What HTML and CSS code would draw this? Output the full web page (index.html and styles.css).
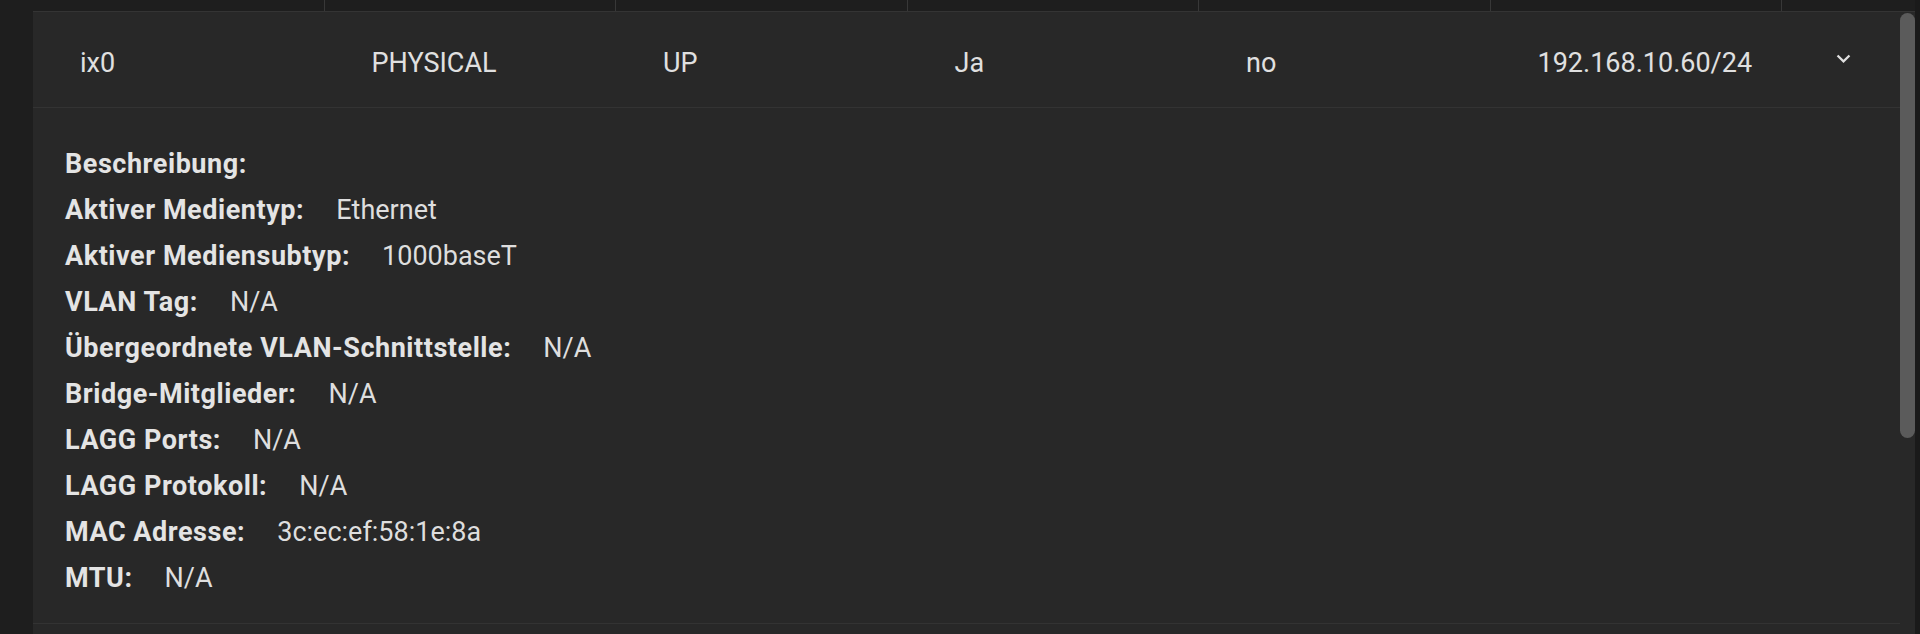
FILE: index.html
```html
<!DOCTYPE html>
<html>
<head>
  <title>Netzwerkschnittstellen</title>
  <link rel="stylesheet" href="styles.css">
</head>
<body>
  <div class="layout">
    <div class="main">
      <div class="thead">
        <div class="th"></div>
        <div class="th"></div>
        <div class="th"></div>
        <div class="th"></div>
        <div class="th"></div>
        <div class="th"></div>
        <div class="th th-last"></div>
      </div>

      <div class="panel">
        <div class="panel-content">
          <div class="row">
            <div class="cell">ix0</div>
            <div class="cell">PHYSICAL</div>
            <div class="cell">UP</div>
            <div class="cell">Ja</div>
            <div class="cell">no</div>
            <div class="cell">192.168.10.60/24</div>
            <div class="cell cell-toggle">
              <svg class="chevron" viewBox="0 0 24 24" width="27" height="27">
                <path d="M7.4 8.6 12 13.2l4.6-4.6L18 10l-6 6-6-6z" fill="#e0e0e0"/>
              </svg>
            </div>
          </div>

          <div class="details">
            <div class="detail"><span class="label">Beschreibung:</span><span class="value"></span></div>
            <div class="detail"><span class="label">Aktiver Medientyp:</span><span class="value">Ethernet</span></div>
            <div class="detail"><span class="label">Aktiver Mediensubtyp:</span><span class="value">1000baseT</span></div>
            <div class="detail"><span class="label">VLAN Tag:</span><span class="value">N/A</span></div>
            <div class="detail"><span class="label">Übergeordnete VLAN-Schnittstelle:</span><span class="value">N/A</span></div>
            <div class="detail"><span class="label">Bridge-Mitglieder:</span><span class="value">N/A</span></div>
            <div class="detail"><span class="label">LAGG Ports:</span><span class="value">N/A</span></div>
            <div class="detail"><span class="label">LAGG Protokoll:</span><span class="value">N/A</span></div>
            <div class="detail"><span class="label">MAC Adresse:</span><span class="value">3c:ec:ef:58:1e:8a</span></div>
            <div class="detail"><span class="label">MTU:</span><span class="value">N/A</span></div>
          </div>
        </div>

        <div class="scrollbar">
          <div class="thumb"></div>
        </div>
      </div>
    </div>
    <div class="edge"></div>
  </div>
</body>
</html>
```

FILE: styles.css
```css
html, body {
  margin: 0;
  height: 634px;
  overflow: hidden;
}

body {
  background: #1e1e1e;
  color: #e0e0e0;
  font-family: Roboto, "Noto Sans", sans-serif;
  font-size: 27px;
}

.layout {
  display: flex;
  height: 634px;
  padding-left: 33px;
}

.main {
  flex: 1;
  display: flex;
  flex-direction: column;
}

.thead {
  display: grid;
  grid-template-columns: repeat(6, 291.5px) 1fr;
  height: 11px;
}

.th {
  border-right: 1px solid #383838;
}

.th-last {
  border-right: none;
}

.panel {
  flex: 1;
  display: flex;
  background: #282828;
  border-top: 1px solid #343434;
}

.panel-content {
  flex: 1;
}

.row {
  display: grid;
  grid-template-columns: repeat(6, 291.5px) 1fr;
  padding: 36px 0 29px;
  line-height: 30px;
  border-bottom: 1px solid #333;
}

.cell {
  padding-left: 47px;
  white-space: nowrap;
}

.cell-toggle {
  padding-left: 4px;
  display: flex;
  justify-content: center;
}

.chevron {
  margin-top: -3px;
}

.details {
  padding: 33px 32px 22px;
  border-bottom: 1px solid #333;
}

.detail {
  display: flex;
  gap: 32px;
  line-height: 46px;
}

.label {
  font-weight: 700;
  letter-spacing: 0.55px;
  color: #e4e4e4;
}

.value {
  color: #dedede;
}

.scrollbar {
  width: 15px;
}

.thumb {
  margin-top: 1px;
  height: 425px;
  border-radius: 8px;
  background: #5b5b5b;
}

.edge {
  width: 5px;
  background: #1a1a1a;
}
```
